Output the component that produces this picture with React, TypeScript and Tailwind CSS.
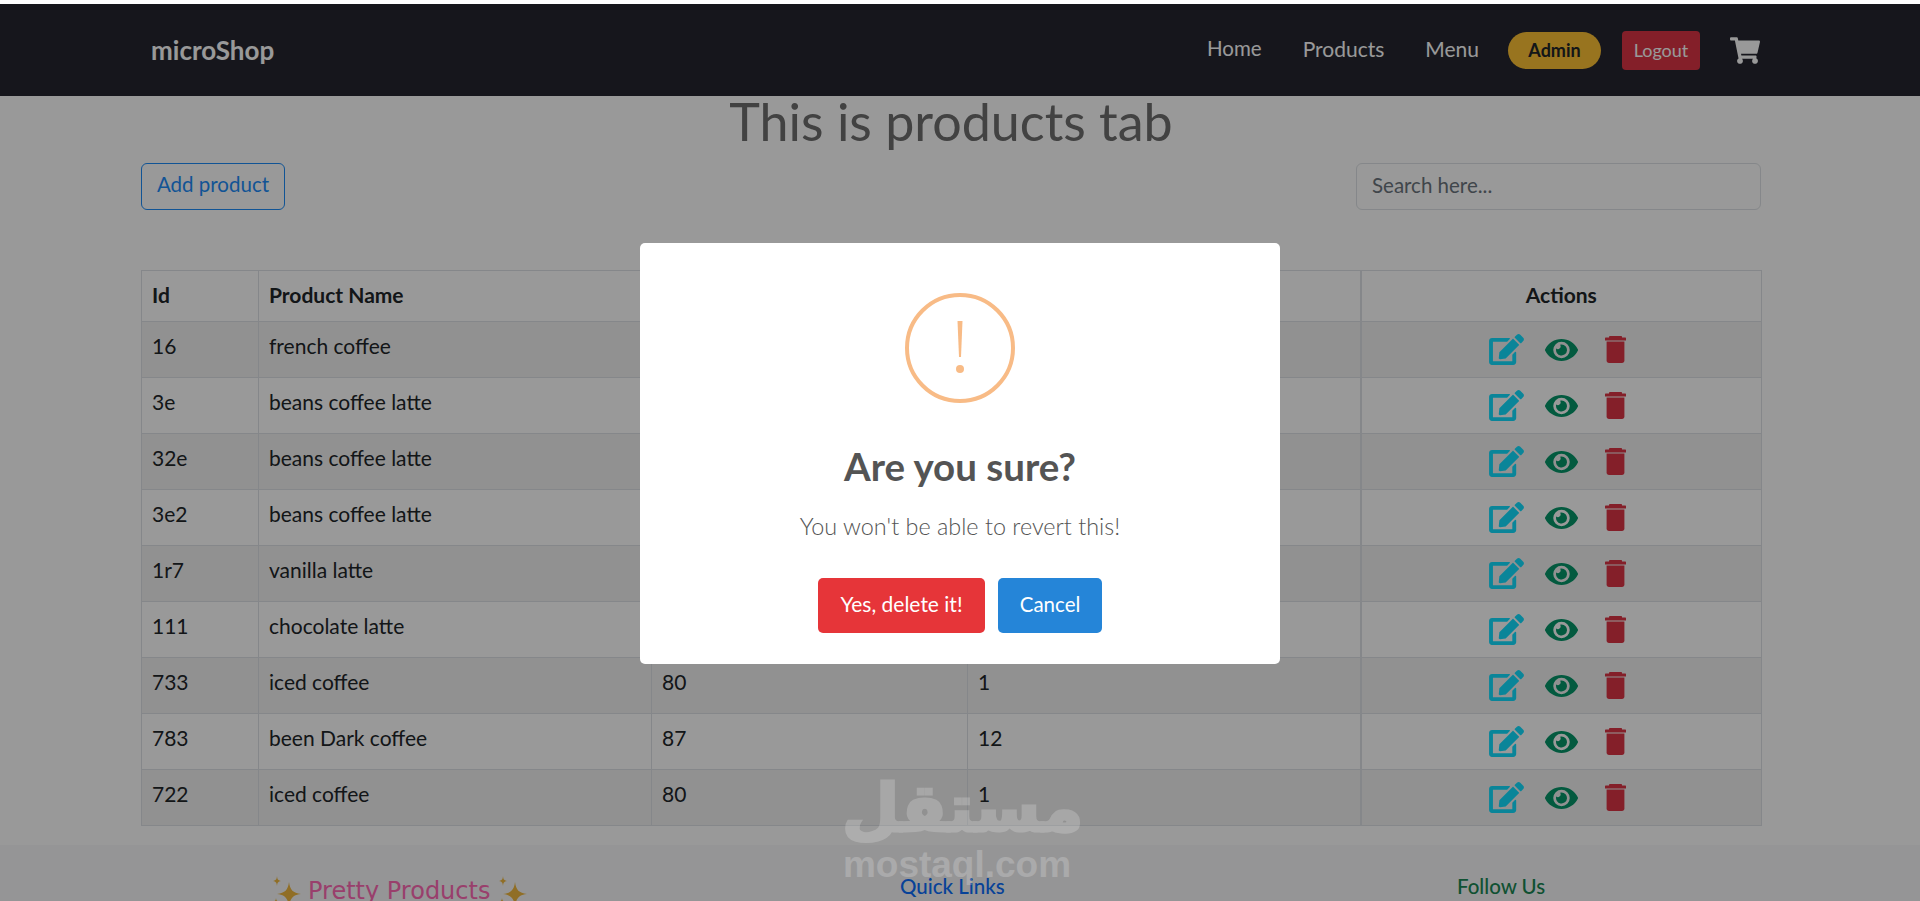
import { FaEdit, FaEye, FaShoppingCart } from "react-icons/fa";

const PRODUCTS = [
  { id: "16", name: "french coffee", price: "80", qty: "1" },
  { id: "3e", name: "beans coffee latte", price: "87", qty: "12" },
  { id: "32e", name: "beans coffee latte", price: "87", qty: "12" },
  { id: "3e2", name: "beans coffee latte", price: "87", qty: "12" },
  { id: "1r7", name: "vanilla latte", price: "80", qty: "1" },
  { id: "111", name: "chocolate latte", price: "80", qty: "1" },
  { id: "733", name: "iced coffee", price: "80", qty: "1" },
  { id: "783", name: "been Dark coffee", price: "87", qty: "12" },
  { id: "722", name: "iced coffee", price: "80", qty: "1" },
];

function Sparkles() {
  return (
    <svg viewBox="0 0 32 32" className="w-[32px] h-[32px] shrink-0" fill="#f0b840">
      <path d="M19 7 C20 15 23 18 31 19 C23 20 20 23 19 32 C18 23 15 20 7 19 C15 18 18 15 19 7Z" />
      <path d="M7 1 C7.4 4.5 8 5.2 11 6 C8 6.6 7.4 7.5 7 11 C6.6 7.5 6 6.6 3 6 C6 5.2 6.6 4.5 7 1Z" />
      <path d="M6 23 C6.3 25.5 7 26.2 9 26.5 C7 26.8 6.3 27.5 6 30 C5.7 27.5 5 26.8 3 26.5 C5 26.2 5.7 25.5 6 23Z" />
    </svg>
  );
}

function TrashIcon() {
  return (
    <svg viewBox="0 0 21 27" className="w-[21px] h-[27px]" fill="#dc3545">
      <path d="M4 0.8 C4 0.4 4.4 0 5 0 H16 C16.6 0 17 0.4 17 0.8 V1.5 H20.4 C20.8 1.5 21 1.8 21 2.2 V4.6 H0 V2.2 C0 1.8 0.2 1.5 0.6 1.5 H4 Z" />
      <path d="M1.6 5.6 H19.4 V24.6 C19.4 26 18.4 27 17 27 H4 C2.6 27 1.6 26 1.6 24.6 Z" />
    </svg>
  );
}

export default function App() {
  return (
    <div className="relative h-[901px] overflow-hidden bg-white pt-1 font-['Lato','Noto_Sans',sans-serif] text-[21px] text-[#212529]">
      {/* Navbar */}
      <nav className="h-[92px] bg-[#25262f] flex items-center pl-[151px] pr-[160px]">
        <span className="text-[26px] font-bold text-white">microShop</span>
        <div className="ml-auto flex items-center">
          <a className="text-white pb-[3px] text-[20.5px]">Home</a>
          <a className="text-white pb-[3px] ml-[41px] text-[21px]">Products</a>
          <a className="text-white pb-[3px] ml-[41px] text-[21px]">Menu</a>
          <span className="ml-[29px] w-[93px] h-[37px] rounded-full bg-[#fdc135] text-[#212529] text-[18px] font-bold flex items-center justify-center">
            Admin
          </span>
          <button className="ml-[21px] w-[78px] h-[39px] rounded bg-[#dc3545] text-white text-[18px]">
            Logout
          </button>
          <FaShoppingCart className="ml-[30px] w-[30px] h-[27px] text-white" />
        </div>
      </nav>

      <main className="w-[1620px] ml-[141px]">
        <h1 className="text-[52px] leading-[50px] pb-[4px] text-[#6e6e6e] text-center">
          This is products tab
        </h1>
        <div className="mt-[13px] flex justify-between">
          <button className="w-[144px] h-[47px] rounded-md border border-[#1d8cf8] pb-[4px] text-[#1d8cf8] text-[20.5px]">
            Add product
          </button>
          <input
            placeholder="Search here..."
            className="w-[405px] h-[47px] rounded-md border border-[#dee2e6] bg-white pl-[15px] pb-[4px] text-[20.5px] placeholder:text-[#6c757d]"
          />
        </div>

        {/* Products table */}
        <table className="mt-[60px] w-[1620px] table-fixed border-collapse border border-[#dee2e6]">
          <colgroup>
            <col className="w-[117px]" />
            <col className="w-[393px]" />
            <col className="w-[316px]" />
            <col className="w-[393px]" />
            <col className="w-[401px]" />
          </colgroup>
          <thead>
            <tr className="h-[51px]">
              <th className="border border-[#dee2e6] px-[10px] pb-[3px] text-left font-bold">Id</th>
              <th className="border border-[#dee2e6] px-[10px] pb-[3px] text-left font-bold">Product Name</th>
              <th className="border border-[#dee2e6] px-[10px] pb-[3px] text-left font-bold">Price</th>
              <th className="border border-[#dee2e6] px-[10px] pb-[3px] text-left font-bold">Quantity</th>
              <th className="border border-[#dee2e6] border-l-2 px-[10px] pb-[3px] text-center font-bold">Actions</th>
            </tr>
          </thead>
          <tbody>
            {PRODUCTS.map((p, i) => (
              <tr key={i} className={`h-[56px] ${i % 2 === 0 ? "bg-[#f2f2f2]" : "bg-white"}`}>
                <td className="border border-[#dee2e6] px-[10px] pb-[8px]">{p.id}</td>
                <td className="border border-[#dee2e6] px-[10px] pb-[8px]">{p.name}</td>
                <td className="border border-[#dee2e6] px-[10px] pb-[8px]">{p.price}</td>
                <td className="border border-[#dee2e6] px-[10px] pb-[8px]">{p.qty}</td>
                <td className="border border-[#dee2e6] border-l-2">
                  <div className="flex items-center justify-center pr-[8px]">
                    <FaEdit className="w-[35px] h-[31px] text-[#12deff]" />
                    <FaEye className="ml-[21px] w-[33px] h-[30px] text-[#059669]" />
                    <div className="ml-[27px]">
                      <TrashIcon />
                    </div>
                  </div>
                </td>
              </tr>
            ))}
          </tbody>
        </table>
      </main>

      {/* Footer */}
      <footer className="mt-[19px] h-[120px] bg-[#f8f9fa] pt-[26px] flex items-start">
        <div className="ml-[270px] mt-[2px] w-[630px] flex items-center gap-[6px] text-[24px] text-[#ff69b4] leading-[36px] font-['DejaVu_Sans',sans-serif]">
          <Sparkles />
          <span className="whitespace-nowrap">Pretty Products</span>
          <Sparkles />
        </div>
        <div className="w-[557px] text-[#0d6efd] text-[20.5px] font-medium leading-[30px]">Quick Links</div>
        <div className="text-[#198754] text-[20.5px] font-medium leading-[30px]">Follow Us</div>
      </footer>

      {/* Dialog backdrop */}
      <div className="absolute inset-x-0 top-1 bottom-0 bg-black/40 flex items-center justify-center">
        <div className="mt-[2px] w-[640px] h-[421px] rounded-[5px] bg-white flex flex-col items-center pt-[50px]">
          <svg viewBox="0 0 110 110" className="w-[110px] h-[110px]">
            <circle cx="55" cy="55" r="53" fill="none" stroke="#f8bb86" strokeWidth="4" />
            <path d="M52.5 28 H57.5 L56 64 H54 Z" fill="#f8bb86" />
            <circle cx="55" cy="76" r="4" fill="#f8bb86" />
          </svg>
          <h2 className="mt-[43px] text-[38.5px] leading-[40px] font-bold text-[#545454]">Are you sure?</h2>
          <p className="mt-[25px] text-[23.4px] leading-[30px] font-light text-[#545454]">
            You won't be able to revert this!
          </p>
          <div className="mt-[37px] flex gap-[13px]">
            <button className="w-[167px] h-[55px] rounded-[5px] bg-[#e63539] pb-[3px] text-white text-[21px]">
              Yes, delete it!
            </button>
            <button className="w-[104px] h-[55px] rounded-[5px] bg-[#2585d8] pb-[3px] text-white text-[20.5px]">
              Cancel
            </button>
          </div>
        </div>
      </div>

      {/* Watermark */}
      <div className="absolute left-[842px] top-[772px] w-[230px] text-center font-bold text-white opacity-20 font-['DejaVu_Sans',sans-serif]">
        <div className="text-[66px] leading-[74px] [-webkit-text-stroke:3px_white]">مستقل</div>
        <div className="font-['Liberation_Sans',sans-serif] text-[37px] leading-[38px]">mostaql.com</div>
      </div>
    </div>
  );
}
